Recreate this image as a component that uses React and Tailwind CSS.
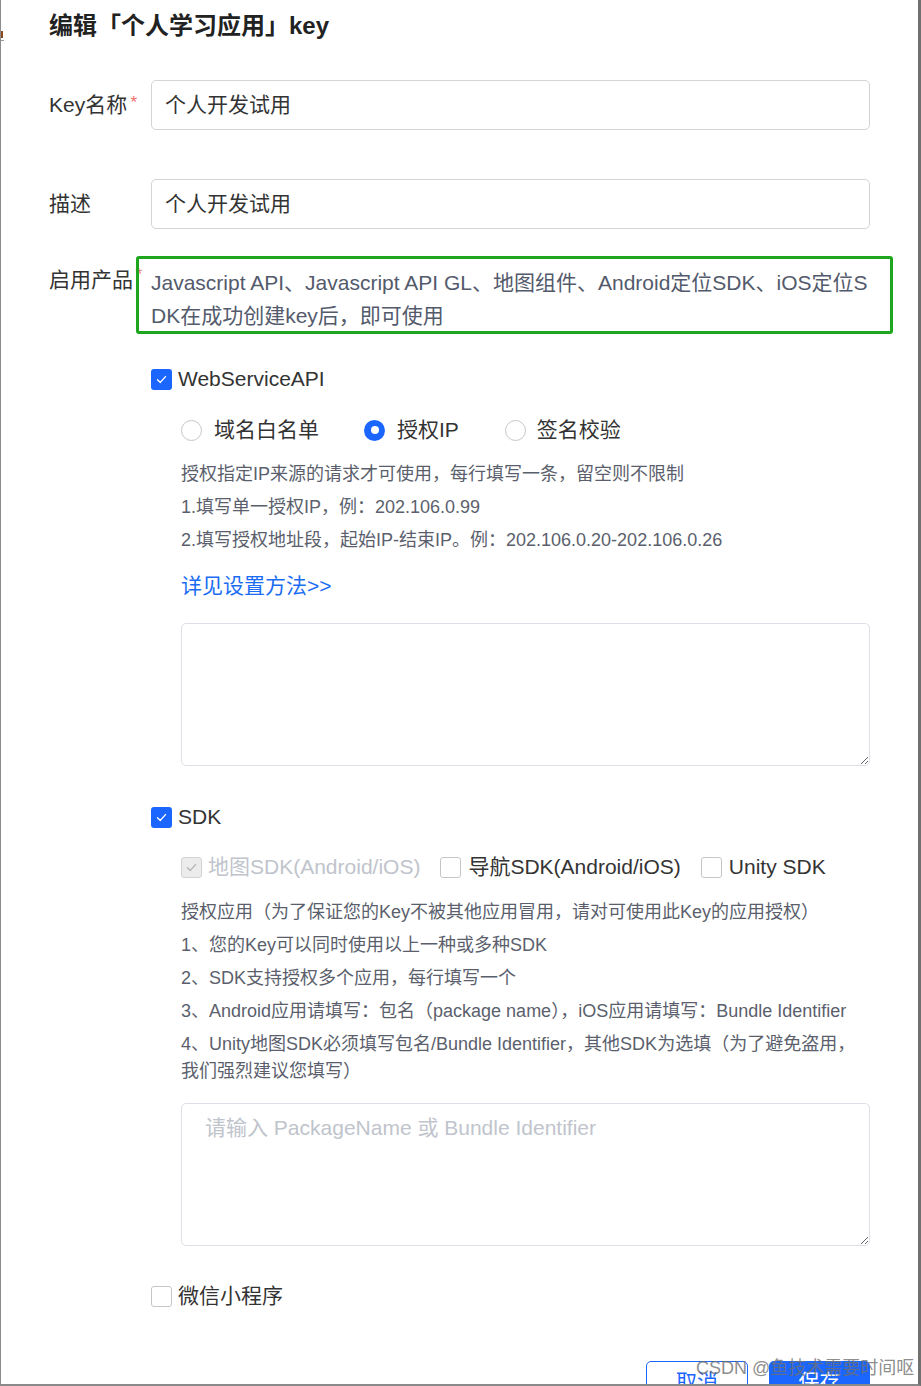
import React from "react";

function Check({ color = "#ffffff" }) {
  return (
    <svg width="13" height="13" viewBox="0 0 13 13" fill="none">
      <path d="M2.5 6.8 L5.3 9.4 L10.5 3.6" stroke={color} strokeWidth="1.4" strokeLinecap="round" strokeLinejoin="round" />
    </svg>
  );
}

function CheckBox({ checked, disabled, className = "" }) {
  if (disabled) {
    return (
      <span className={"w-[21px] h-[21px] rounded-[3px] border border-[#d3d3d3] bg-[#ececec] flex items-center justify-center shrink-0 " + className}>
        <Check color="#b5b5b5" />
      </span>
    );
  }
  if (checked) {
    return (
      <span className={"w-[21px] h-[21px] rounded-[3px] bg-[#1a66ff] flex items-center justify-center shrink-0 " + className}>
        <Check />
      </span>
    );
  }
  return <span className={"block w-[21px] h-[21px] rounded-[3px] border border-[#c6c6c6] bg-white shrink-0 " + className} />;
}

function Radio({ checked, className = "" }) {
  if (checked) {
    return (
      <span className={"w-[21px] h-[21px] rounded-full bg-[#1a66ff] flex items-center justify-center shrink-0 " + className}>
        <span className="block w-[8px] h-[8px] rounded-full bg-white" />
      </span>
    );
  }
  return <span className={"block w-[21px] h-[21px] rounded-full border border-[#c6c6c6] bg-white shrink-0 " + className} />;
}

function Star({ className = "" }) {
  return <span className={"absolute text-[#f56c6c] text-[17px] leading-none " + className}>*</span>;
}

export default function App() {
  return (
    <div className="relative w-[921px] h-[1386px] overflow-hidden bg-white border-l border-l-[#8c8c8c] border-r-[3px] border-r-[#707070] border-b-[2px] border-b-[#8a8a8a] font-['Liberation_Sans','Noto_Sans_CJK_SC',sans-serif] text-[#333333]">
      <span className="absolute left-0 top-[31px] w-[2px] h-[7px] bg-[#8a4a1a]" />
      <span className="absolute left-0 top-[40px] w-[3px] h-[1px] bg-[#9a9a9a]" />
      <div className="pl-[48px] pr-[48px] flex flex-col">
        {/* Title */}
        <div className="mt-[10px] h-[32px] leading-[32px] text-[24px] font-bold text-[#222222]">
          编辑「个人学习应用」key
        </div>

        {/* Key name */}
        <div className="mt-[38px] flex items-center">
          <div className="w-[102px] shrink-0 text-[21px] leading-[30px]">
            <span className="relative">
              Key名称
              <Star className="-right-[10px] top-[1px]" />
            </span>
          </div>
          <div className="flex-1 h-[50px] border border-[#d4d4d4] rounded-[5px] px-[13px] flex items-center text-[21px] text-[#333333]">
            个人开发试用
          </div>
        </div>

        {/* Description */}
        <div className="mt-[49px] flex items-center">
          <div className="w-[102px] shrink-0 text-[21px] leading-[30px]">描述</div>
          <div className="flex-1 h-[50px] border border-[#d4d4d4] rounded-[5px] px-[13px] flex items-center text-[21px] text-[#333333]">
            个人开发试用
          </div>
        </div>

        {/* Products */}
        <div className="mt-[37px] flex items-start">
          <div className="w-[102px] shrink-0 text-[21px] leading-[33px] -mt-[3px]">
            <span className="relative">
              启用产品
              <Star className="-right-[9px] -top-[2px]" />
            </span>
          </div>
          <div className="relative flex-1 text-[21px] leading-[33px] text-[#535a6c]">
            <div className="whitespace-nowrap">Javascript API、Javascript API GL、地图组件、Android定位SDK、iOS定位S</div>
            <div className="whitespace-nowrap">DK在成功创建key后，即可使用</div>
            <span className="absolute -left-[15px] -right-[23px] -top-[10px] -bottom-[2px] border-[3px] border-[#1fa61f] rounded-[3px]" />
          </div>
        </div>

        {/* WebServiceAPI */}
        <div className="ml-[102px] flex flex-col">
          <div className="mt-[35px] h-[24px] flex items-center gap-[6px] text-[21px]">
            <CheckBox checked />
            <span>WebServiceAPI</span>
          </div>

          <div className="ml-[30px] flex flex-col">
            <div className="mt-[27px] h-[24px] flex items-center text-[21px]">
              <Radio />
              <span className="ml-[12px]">域名白名单</span>
              <Radio checked className="ml-[45px]" />
              <span className="ml-[12px]">授权IP</span>
              <Radio className="ml-[46px]" />
              <span className="ml-[11px]">签名校验</span>
            </div>

            <div className="mt-[16px] text-[18px] leading-[33px] text-[#5b5f6d]">
              <div>授权指定IP来源的请求才可使用，每行填写一条，留空则不限制</div>
              <div>1.填写单一授权IP，例：202.106.0.99</div>
              <div>2.填写授权地址段，起始IP-结束IP。例：202.106.0.20-202.106.0.26</div>
            </div>

            <div className="mt-[14px] h-[30px] leading-[30px] text-[21px] text-[#1a6cf3]">详见设置方法&gt;&gt;</div>

            <textarea className="mt-[22px] h-[143px] w-full border border-[#dcdfe6] rounded-[5px] resize-y outline-none px-[22px] py-[9px] text-[21px]" />
          </div>

          {/* SDK */}
          <div className="mt-[39px] h-[24px] flex items-center gap-[6px] text-[21px]">
            <CheckBox checked />
            <span>SDK</span>
          </div>

          <div className="ml-[30px] flex flex-col">
            <div className="mt-[26px] h-[24px] flex items-center text-[21px]">
              <CheckBox checked disabled />
              <span className="ml-[6px] text-[#c0c4cc]">地图SDK(Android/iOS)</span>
              <CheckBox className="ml-[20px]" />
              <span className="ml-[7px]">导航SDK(Android/iOS)</span>
              <CheckBox className="ml-[20px]" />
              <span className="ml-[7px]">Unity SDK</span>
            </div>

            <div className="mt-[20px] text-[18px] leading-[27px] text-[#5b5f6d] flex flex-col gap-[6px]">
              <div>授权应用（为了保证您的Key不被其他应用冒用，请对可使用此Key的应用授权）</div>
              <div>1、您的Key可以同时使用以上一种或多种SDK</div>
              <div>2、SDK支持授权多个应用，每行填写一个</div>
              <div>3、Android应用请填写：包名（package name），iOS应用请填写：Bundle Identifier</div>
              <div>
                <div className="whitespace-nowrap">4、Unity地图SDK必须填写包名/Bundle Identifier，其他SDK为选填（为了避免盗用，</div>
                <div>我们强烈建议您填写）</div>
              </div>
            </div>

            <textarea
              placeholder="请输入 PackageName 或 Bundle Identifier"
              className="mt-[18px] h-[143px] w-full border border-[#dcdfe6] rounded-[5px] resize-y outline-none px-[23px] py-[9px] text-[21px] leading-[30px] placeholder:text-[#c0c4cc]"
            />
          </div>

          {/* WeChat */}
          <div className="mt-[38px] h-[24px] flex items-center gap-[6px] text-[21px]">
            <CheckBox />
            <span>微信小程序</span>
          </div>
        </div>

        {/* Buttons */}
        <div className="mt-[53px] flex justify-end gap-[21px]">
          <div className="w-[102px] h-[42px] border border-[#1a66ff] rounded-[5px] flex items-center justify-center text-[21px] text-[#1a66ff]">取消</div>
          <div className="w-[101px] h-[42px] bg-[#1a66ff] rounded-[5px] flex items-center justify-center text-[21px] text-white">保存</div>
        </div>
      </div>

      <div className="absolute left-[695px] top-[1356px] text-[18px] leading-[24px] text-[#6f6f6f]/80 whitespace-nowrap">
        CSDN @鱼技术需要时间呕
      </div>
    </div>
  );
}
